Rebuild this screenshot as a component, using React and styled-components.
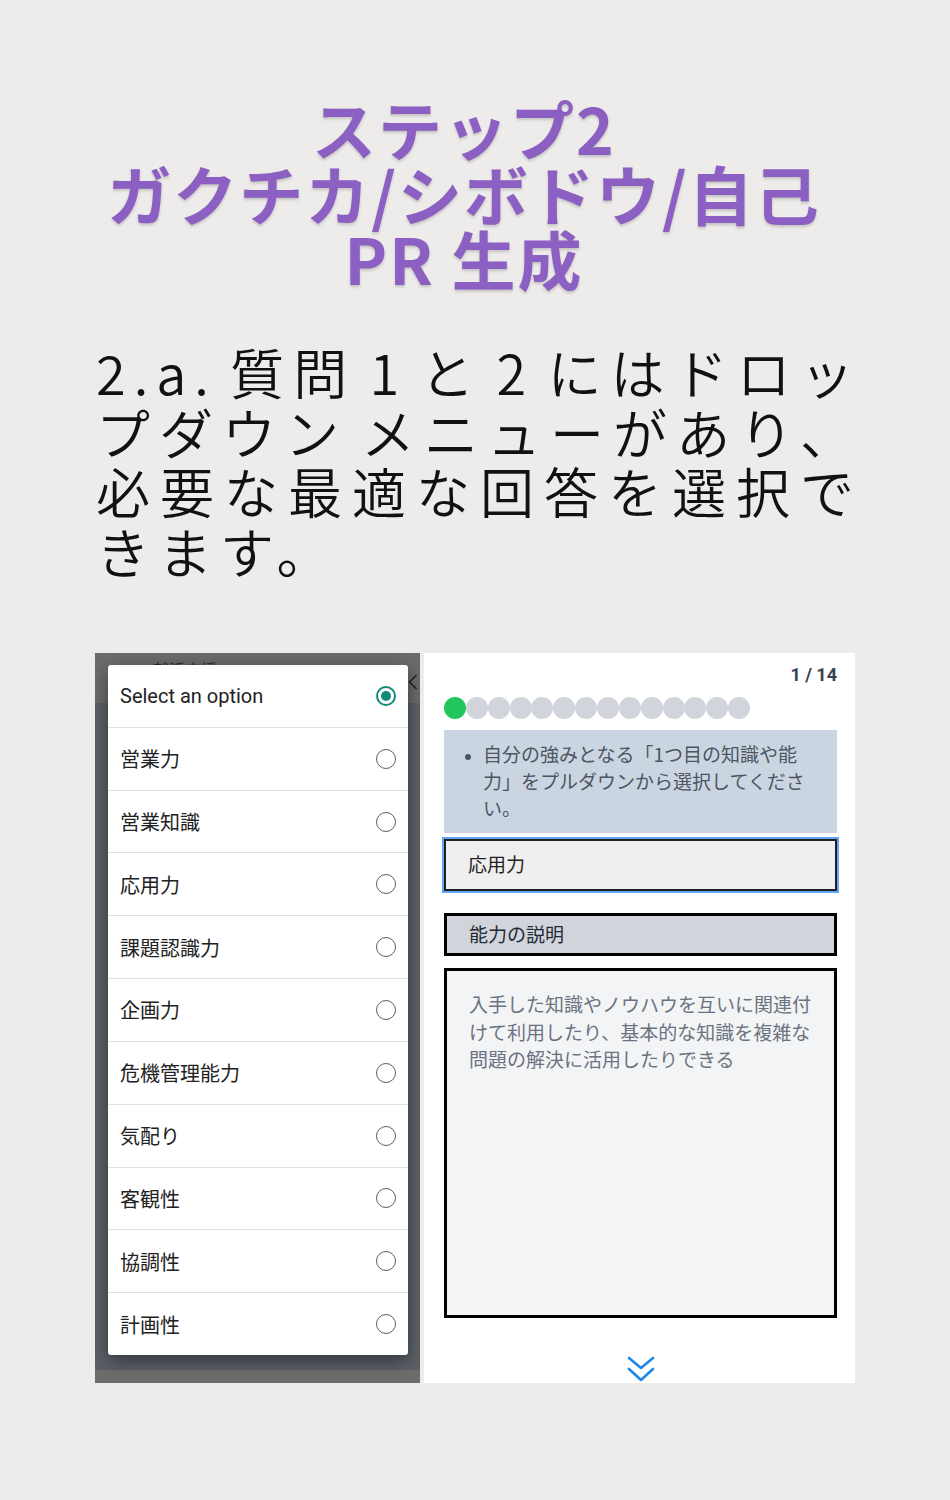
import React from "react";
import styled, { createGlobalStyle } from "styled-components";

const GlobalStyle = createGlobalStyle`
    body {
        margin: 0;
        background: #edecea;
        font-family: "Noto Sans CJK JP", "Noto Sans", sans-serif;
    }
`;

const Page = styled.div`
    width: 950px;
    min-height: 1500px;
    padding-top: 95px;
    box-sizing: border-box;
    background: #edecea;
`;

const Title = styled.h1`
    margin: 0;
    padding-right: 22px;
    text-align: center;
    font-family: "Noto Sans CJK JP", sans-serif;
    font-weight: 700;
    font-size: 64px;
    line-height: 65px;
    letter-spacing: 2px;
    color: #8c5fc3;
    text-shadow: 0 2px 3px rgba(0, 0, 0, 0.18);
`;

const Lead = styled.div`
    margin: 52px 0 0 96px;
    width: 766px;
    font-family: "Noto Sans CJK JP", sans-serif;
    font-weight: 350;
    font-size: 54px;
    line-height: 59.5px;
    letter-spacing: 8px;
    word-spacing: -8px;
    color: #111;
`;

const LeadLine = styled.div`
    white-space: nowrap;
    text-align: ${props => (props.$last ? "left" : "justify")};
    text-align-last: ${props => (props.$last ? "left" : "justify")};
`;

const Shots = styled.div`
    display: flex;
    gap: 4px;
    margin: 73px 0 0 95px;
    height: 730px;
`;

/* left screenshot: dimmed app with option dialog over it */
const LeftShot = styled.div`
    position: relative;
    width: 325px;
    display: flex;
    flex-direction: column;
    background: #5c6168;
    overflow: hidden;
`;

const AppBar = styled.div`
    height: 50px;
    display: flex;
    justify-content: space-between;
    align-items: flex-start;
    padding: 4px 2px 0 40px;
    box-sizing: border-box;
    background: #6b6b6b;
    color: #2e2e2e;
    font-size: 16px;
`;

const Back = styled.span`
    display: flex;
    margin-top: 17px;
`;

const AppBody = styled.div`
    flex: 1;
`;

const AppFoot = styled.div`
    height: 13px;
    background: #6d6d6d;
`;

const Dialog = styled.div`
    position: absolute;
    top: 12px;
    left: 13px;
    width: 300px;
    height: 690px;
    display: flex;
    flex-direction: column;
    background: #fff;
    border-radius: 3px;
    box-shadow: 0 6px 18px rgba(0, 0, 0, 0.45);
`;

const Option = styled.div`
    flex: 1;
    display: flex;
    align-items: center;
    justify-content: space-between;
    padding: 0 12px 0 12px;
    border-top: ${props => (props.$first ? "none" : "1px solid #e2e2e2")};
    font-family: ${props => (props.$latin ? "Roboto, \"Noto Sans CJK JP\", sans-serif" : "\"Noto Sans CJK JP\", sans-serif")};
    font-size: 20px;
    color: #222;
`;

const Radio = styled.span`
    position: relative;
    width: 20px;
    height: 20px;
    box-sizing: border-box;
    border-radius: 50%;
    border: ${props => (props.$checked ? "2px solid #118a78" : "1.8px solid #5e5e5e")};

    &::after {
        content: "";
        position: absolute;
        top: 3px;
        left: 3px;
        width: 10px;
        height: 10px;
        border-radius: 50%;
        background: #118a78;
        opacity: ${props => (props.$checked ? 1 : 0)};
    }
`;

/* right screenshot: question form */
const RightShot = styled.div`
    width: 431px;
    display: flex;
    flex-direction: column;
    padding: 11px 18px 0 20px;
    box-sizing: border-box;
    background: #fff;
    overflow: hidden;
    font-family: "Noto Sans CJK JP", sans-serif;
    font-size: 19px;
`;

const Counter = styled.div`
    text-align: right;
    font-family: Roboto, "Noto Sans CJK JP", sans-serif;
    font-weight: 700;
    font-size: 18px;
    line-height: 22px;
    color: #374151;
`;

const Dots = styled.div`
    display: flex;
    margin-top: 11px;
`;

const Dot = styled.span`
    width: 22px;
    height: 22px;
    margin-right: -0.15px;
    border-radius: 50%;
    background: ${props => (props.$done ? "#22c55e" : "#d1d5db")};
`;

const Hint = styled.ul`
    margin: 11px 0 0;
    padding: 9.5px 26px 12.5px 39px;
    background: #cbd5e1;
    color: #4b5563;
    line-height: 27px;

    li::marker {
        font-size: 15px;
    }
`;

const Picker = styled.div`
    margin-top: 6px;
    height: 52px;
    display: flex;
    align-items: center;
    padding: 0 22px 3px;
    box-sizing: border-box;
    background: #efefef;
    border: 2px solid #1f1f1f;
    box-shadow: 0 0 0 2px #60a5fa;
    color: #222;
`;

const Label = styled.div`
    margin-top: 22px;
    height: 43px;
    display: flex;
    align-items: center;
    padding: 0 19px 2px 22px;
    box-sizing: border-box;
    background: #d1d5db;
    border: 3px solid #000;
    color: #1f2937;
`;

const Detail = styled.div`
    margin-top: 12px;
    height: 350px;
    padding: 19px 15px 0 22px;
    box-sizing: border-box;
    background: #f3f4f6;
    border: 3px solid #000;
    color: #6b7280;
    line-height: 27.5px;
`;

const More = styled.div`
    margin-top: 38px;
    display: flex;
    justify-content: center;
`;

const options = [
    "営業力",
    "営業知識",
    "応用力",
    "課題認識力",
    "企画力",
    "危機管理能力",
    "気配り",
    "客観性",
    "協調性",
    "計画性",
];

export default function App() {
    return (
        <>
            <GlobalStyle />
            <Page>
                <Title>
                    ステップ2<br />
                    ガクチカ/シボドウ/自己<br />
                    PR 生成
                </Title>
                <Lead>
                    <LeadLine>2.a. 質問 1 と 2 にはドロッ</LeadLine>
                    <LeadLine>プダウン メニューがあり、</LeadLine>
                    <LeadLine>必要な最適な回答を選択で</LeadLine>
                    <LeadLine $last>きます。</LeadLine>
                </Lead>
                <Shots>
                    <LeftShot>
                        <AppBar>
                            <span>— 就活支援</span>
                            <Back>
                                <svg width="10" height="16" viewBox="0 0 10 16" fill="none" stroke="#1d1d1d" strokeWidth="1.4">
                                    <polyline points="8.5,1 1.5,8 8.5,15" />
                                </svg>
                            </Back>
                        </AppBar>
                        <AppBody />
                        <AppFoot />
                        <Dialog>
                            <Option $first $latin>
                                Select an option
                                <Radio $checked />
                            </Option>
                            {options.map((o) => (
                                <Option key={o}>
                                    {o}
                                    <Radio />
                                </Option>
                            ))}
                        </Dialog>
                    </LeftShot>
                    <RightShot>
                        <Counter>1 / 14</Counter>
                        <Dots>
                            {Array.from({ length: 14 }).map((_, i) => (
                                <Dot key={i} $done={i === 0} />
                            ))}
                        </Dots>
                        <Hint>
                            <li>自分の強みとなる「1つ目の知識や能力」をプルダウンから選択してください。</li>
                        </Hint>
                        <Picker>応用力</Picker>
                        <Label>能力の説明</Label>
                        <Detail>
                            入手した知識やノウハウを互いに関連付けて利用したり、基本的な知識を複雑な問題の解決に活用したりできる
                        </Detail>
                        <More>
                            <svg width="30" height="27" viewBox="0 0 30 27" fill="none" stroke="#1a88e8" strokeWidth="2.6" strokeLinecap="round" strokeLinejoin="round">
                                <polyline points="3,2 15,12 27,2" />
                                <polyline points="3,13 15,24 27,13" />
                            </svg>
                        </More>
                    </RightShot>
                </Shots>
            </Page>
        </>
    );
}
